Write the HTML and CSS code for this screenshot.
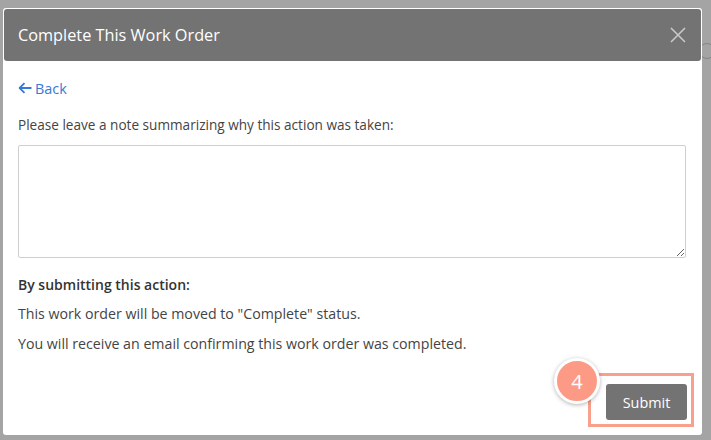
FILE: index.html
```html
<!DOCTYPE html>
<html lang="en">
<head>
<meta charset="utf-8">
<title>Complete This Work Order</title>
<link rel="stylesheet" href="styles.css">
</head>
<body>
<span class="bg-icon"></span>
<div class="backdrop">
  <div class="modal">
    <div class="modal-header">
      <h1 class="modal-title">Complete This Work Order</h1>
      <button class="close" aria-label="Close">
        <svg width="16" height="16" viewBox="0 0 16 16"><path d="M1 1 L15 15 M15 1 L1 15" stroke="#c9c9c9" stroke-width="1.6" fill="none"/></svg>
      </button>
    </div>
    <div class="modal-body">
      <a class="back" href="#">
        <svg width="14" height="12" viewBox="0 0 14 12"><path d="M13.5 6 H2 M6.5 1.2 L1.6 6 L6.5 10.8" stroke="#3a78d8" stroke-width="1.8" fill="none" stroke-linejoin="round"/></svg>
        <span>Back</span>
      </a>
      <p class="prompt">Please leave a note summarizing why this action was taken:</p>
      <textarea class="note"></textarea>
      <p class="summary-title">By submitting this action:</p>
      <p class="line">This work order will be moved to "Complete" status.</p>
      <p class="line">You will receive an email confirming this work order was completed.</p>
    </div>
    <div class="modal-footer">
      <div class="highlight">
        <button class="submit">Submit</button>
        <span class="badge">4</span>
      </div>
    </div>
  </div>
</div>
</body>
</html>
```

FILE: styles.css
```css
html, body {
  margin: 0;
  padding: 0;
}
body {
  position: relative;
  width: 711px;
  height: 440px;
  overflow: hidden;
  background: #a4a4a4;
  font-family: "Open Sans", "Noto Sans", sans-serif;
}
.bg-icon {
  position: absolute;
  left: 699px;
  top: 43px;
  width: 14px;
  height: 14px;
  border: 1.5px solid #858585;
  border-radius: 50%;
}
.backdrop {
  position: relative;
  padding: 8px 0 0 3px;
}
.modal {
  width: 699px;
  height: 427px;
  box-sizing: border-box;
  background: #fff;
  padding: 1px;
  border-radius: 3px;
  display: flex;
  flex-direction: column;
}
.modal-header {
  height: 52px;
  background: #737373;
  border-radius: 3px;
  display: flex;
  align-items: center;
  justify-content: space-between;
  padding: 0 14px 0 14px;
  flex-shrink: 0;
}
.modal-title {
  margin: 0 0 1px;
  font-size: 16.3px;
  font-weight: 400;
  color: #fff;
}
.close {
  background: none;
  border: 0;
  padding: 0;
  margin-right: 1px;
  width: 16px;
  height: 16px;
  display: flex;
}
.modal-body {
  padding: 0 15px 0 14px;
  display: flex;
  flex-direction: column;
  align-items: flex-start;
}
.back {
  margin-top: 18px;
  display: flex;
  align-items: center;
  gap: 3px;
  color: #3a78d8;
  text-decoration: none;
  font-size: 14.4px;
  height: 18px;
}
.prompt {
  margin: 18px 0 0;
  font-size: 13.6px;
  color: #444;
  line-height: 20px;
}
.note {
  margin-top: 10px;
  width: 668px;
  height: 113px;
  box-sizing: border-box;
  border: 1px solid #cfcfcf;
  border-radius: 2px;
  resize: vertical;
  font-family: inherit;
}
.summary-title {
  margin: 17px 0 0;
  font-size: 14px;
  font-weight: 600;
  color: #333;
  line-height: 20px;
}
.line {
  margin: 9px 0 0;
  font-size: 14.2px;
  color: #444;
  line-height: 20px;
}
.line + .line {
  margin-top: 10px;
}
.modal-footer {
  margin-top: auto;
  display: flex;
  justify-content: flex-end;
  padding: 0 7px 7px 0;
}
.highlight {
  position: relative;
  border: 3px solid #f9a08c;
  padding: 8px 4px 4px 15px;
}
.submit {
  display: block;
  width: 81px;
  height: 36px;
  background: #737373;
  color: #fff;
  border: 0;
  border-radius: 3px;
  font-family: inherit;
  font-size: 14.4px;
}
.badge {
  position: absolute;
  left: -37px;
  top: -18px;
  width: 40px;
  height: 40px;
  border-radius: 50%;
  background: #fc9a86;
  border: 3px solid #fff;
  box-shadow: 0 1px 4px rgba(0,0,0,0.3);
  color: #fff;
  font-size: 20px;
  display: flex;
  align-items: center;
  justify-content: center;
}
```
